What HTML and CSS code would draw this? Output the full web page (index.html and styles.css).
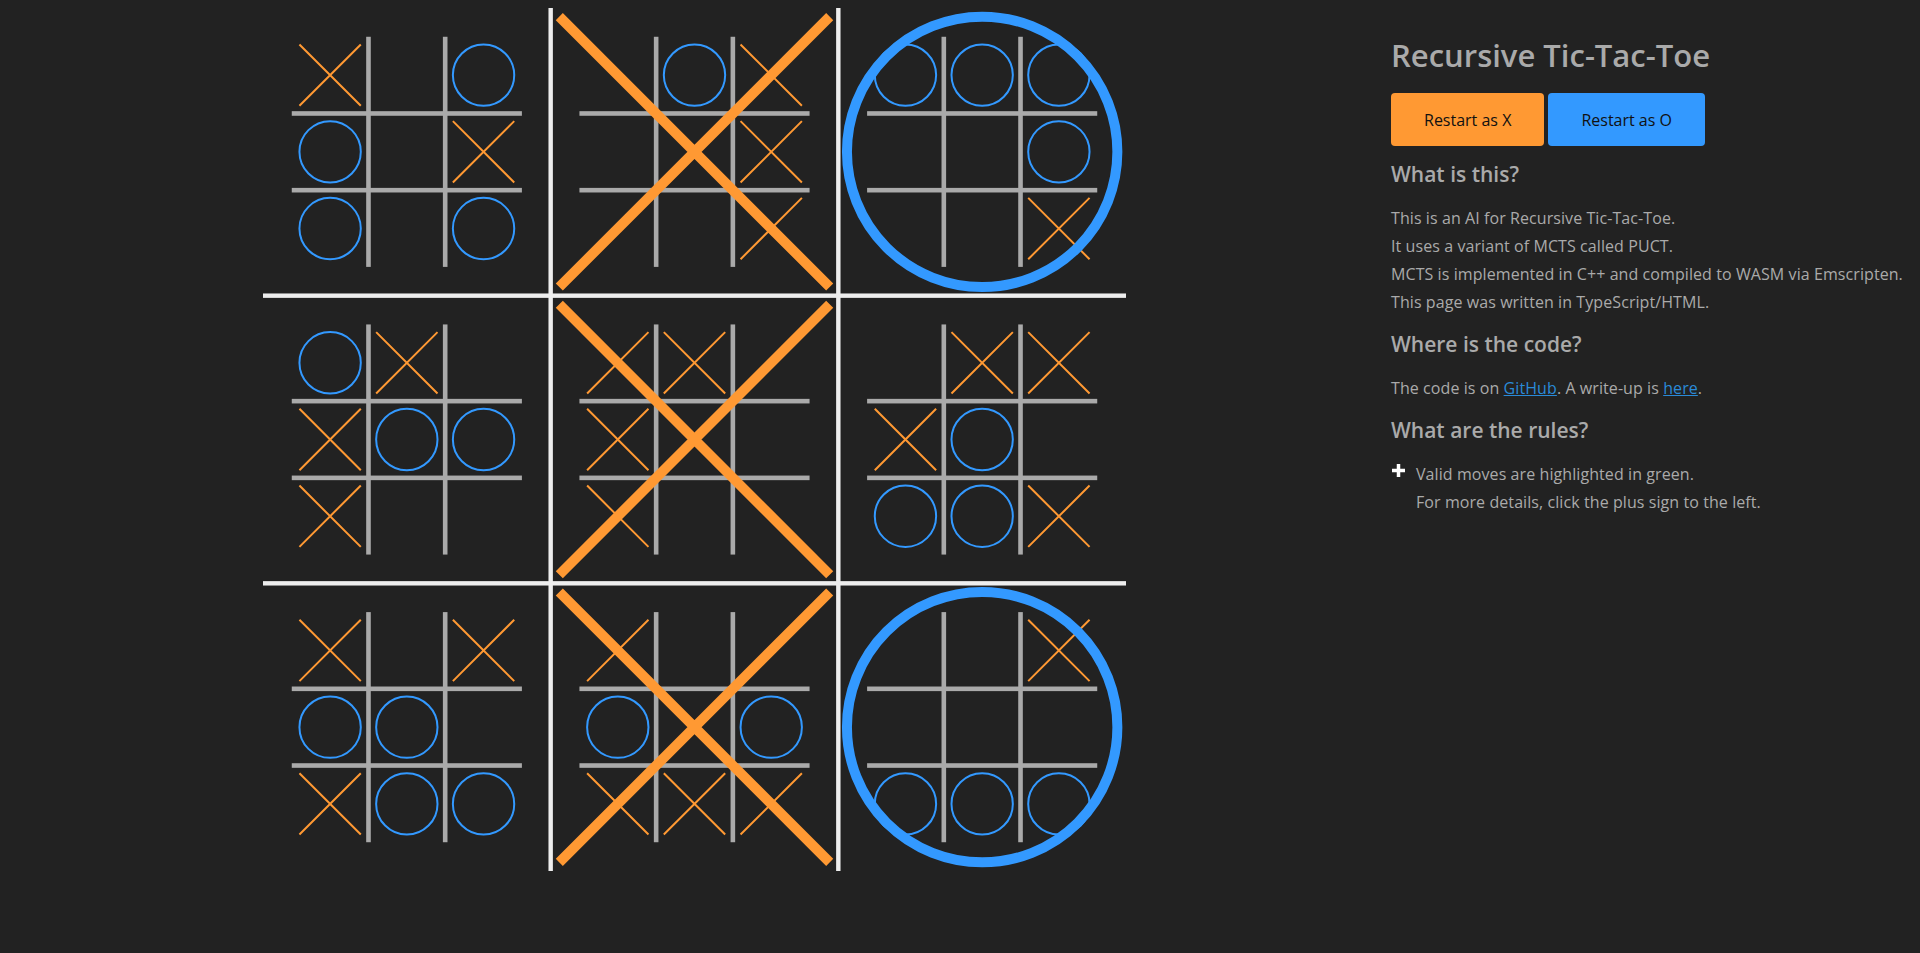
FILE: index.html
```html
<!DOCTYPE html>
<html lang="en">
<head>
<meta charset="utf-8">
<title>Recursive Tic-Tac-Toe</title>
<link rel="stylesheet" href="styles.css">
</head>
<body>
<div class="page">
  <div class="board">
    <svg class="board-svg" viewBox="0 0 863 863" width="863" height="863" xmlns="http://www.w3.org/2000/svg" xmlns:xlink="http://www.w3.org/1999/xlink">
      <defs>
        <g id="sb">
          <rect class="sub-line" x="103.18" y="28.77" width="4.6" height="230.13"/>
          <rect class="sub-line" x="179.89" y="28.77" width="4.6" height="230.13"/>
          <rect class="sub-line" x="28.77" y="103.18" width="230.13" height="4.6"/>
          <rect class="sub-line" x="28.77" y="179.89" width="230.13" height="4.6"/>
        </g>
        <path id="mx" class="mark-x" d="M-30.68 -30.68L30.68 30.68M30.68 -30.68L-30.68 30.68"/>
        <circle id="mo" class="mark-o" cx="0" cy="0" r="30.68"/>
        <path id="bx" class="big-x" d="M-135.2 -135.2L135.2 135.2M135.2 -135.2L-135.2 135.2"/>
        <circle id="bo" class="big-o" cx="0" cy="0" r="135.2"/>
      </defs>

      <rect class="main-line" x="285.47" y="0" width="4.4" height="863"/>
      <rect class="main-line" x="573.13" y="0" width="4.4" height="863"/>
      <rect class="main-line" x="0" y="285.47" width="863" height="4.4"/>
      <rect class="main-line" x="0" y="573.13" width="863" height="4.4"/>

      <!-- (0,0) -->
      <g transform="translate(0,0)">
        <use href="#sb"/>
        <use href="#mx" x="67.12" y="67.12"/>
        <use href="#mo" x="220.55" y="67.12"/>
        <use href="#mo" x="67.12" y="143.83"/>
        <use href="#mx" x="220.55" y="143.83"/>
        <use href="#mo" x="67.12" y="220.55"/>
        <use href="#mo" x="220.55" y="220.55"/>
      </g>
      <!-- (0,1) -->
      <g transform="translate(287.67,0)">
        <use href="#sb"/>
        <use href="#mo" x="143.83" y="67.12"/>
        <use href="#mx" x="220.55" y="67.12"/>
        <use href="#mx" x="220.55" y="143.83"/>
        <use href="#mx" x="220.55" y="220.55"/>
        <use href="#bx" x="143.83" y="143.83"/>
      </g>
      <!-- (0,2) -->
      <g transform="translate(575.33,0)">
        <use href="#sb"/>
        <use href="#mo" x="67.12" y="67.12"/>
        <use href="#mo" x="143.83" y="67.12"/>
        <use href="#mo" x="220.55" y="67.12"/>
        <use href="#mo" x="220.55" y="143.83"/>
        <use href="#mx" x="220.55" y="220.55"/>
        <use href="#bo" x="143.83" y="143.83"/>
      </g>
      <!-- (1,0) -->
      <g transform="translate(0,287.67)">
        <use href="#sb"/>
        <use href="#mo" x="67.12" y="67.12"/>
        <use href="#mx" x="143.83" y="67.12"/>
        <use href="#mx" x="67.12" y="143.83"/>
        <use href="#mo" x="143.83" y="143.83"/>
        <use href="#mo" x="220.55" y="143.83"/>
        <use href="#mx" x="67.12" y="220.55"/>
      </g>
      <!-- (1,1) -->
      <g transform="translate(287.67,287.67)">
        <use href="#sb"/>
        <use href="#mx" x="67.12" y="67.12"/>
        <use href="#mx" x="143.83" y="67.12"/>
        <use href="#mx" x="67.12" y="143.83"/>
        <use href="#mx" x="67.12" y="220.55"/>
        <use href="#bx" x="143.83" y="143.83"/>
      </g>
      <!-- (1,2) -->
      <g transform="translate(575.33,287.67)">
        <use href="#sb"/>
        <use href="#mx" x="143.83" y="67.12"/>
        <use href="#mx" x="220.55" y="67.12"/>
        <use href="#mx" x="67.12" y="143.83"/>
        <use href="#mo" x="143.83" y="143.83"/>
        <use href="#mo" x="67.12" y="220.55"/>
        <use href="#mo" x="143.83" y="220.55"/>
        <use href="#mx" x="220.55" y="220.55"/>
      </g>
      <!-- (2,0) -->
      <g transform="translate(0,575.33)">
        <use href="#sb"/>
        <use href="#mx" x="67.12" y="67.12"/>
        <use href="#mx" x="220.55" y="67.12"/>
        <use href="#mo" x="67.12" y="143.83"/>
        <use href="#mo" x="143.83" y="143.83"/>
        <use href="#mx" x="67.12" y="220.55"/>
        <use href="#mo" x="143.83" y="220.55"/>
        <use href="#mo" x="220.55" y="220.55"/>
      </g>
      <!-- (2,1) -->
      <g transform="translate(287.67,575.33)">
        <use href="#sb"/>
        <use href="#mx" x="67.12" y="67.12"/>
        <use href="#mo" x="67.12" y="143.83"/>
        <use href="#mo" x="220.55" y="143.83"/>
        <use href="#mx" x="67.12" y="220.55"/>
        <use href="#mx" x="143.83" y="220.55"/>
        <use href="#mx" x="220.55" y="220.55"/>
        <use href="#bx" x="143.83" y="143.83"/>
      </g>
      <!-- (2,2) -->
      <g transform="translate(575.33,575.33)">
        <use href="#sb"/>
        <use href="#mx" x="220.55" y="67.12"/>
        <use href="#mo" x="67.12" y="220.55"/>
        <use href="#mo" x="143.83" y="220.55"/>
        <use href="#mo" x="220.55" y="220.55"/>
        <use href="#bo" x="143.83" y="143.83"/>
      </g>
    </svg>
  </div>

  <div class="panel">
    <h1 class="title">Recursive Tic-Tac-Toe</h1>
    <div class="buttons">
      <button class="btn btn-x">Restart as X</button>
      <button class="btn btn-o">Restart as O</button>
    </div>
    <h2 class="section-title">What is this?</h2>
    <p class="text">This is an AI for Recursive Tic-Tac-Toe.<br>It uses a variant of MCTS called PUCT.<br>MCTS is implemented in C++ and compiled to WASM via Emscripten.<br>This page was written in TypeScript/HTML.</p>
    <h2 class="section-title">Where is the code?</h2>
    <p class="text">The code is on <a class="link" href="#">GitHub</a>. A write-up is <a class="link" href="#">here</a>.</p>
    <h2 class="section-title">What are the rules?</h2>
    <div class="rules">
      <span class="plus">
        <svg class="plus-icon" viewBox="0 0 13 13" width="13" height="13"><rect x="0" y="4.75" width="13" height="3.5"/><rect x="4.75" y="0" width="3.5" height="13"/></svg>
      </span>
      <p class="text">Valid moves are highlighted in green.<br>For more details, click the plus sign to the left.</p>
    </div>
  </div>
</div>
</body>
</html>
```

FILE: styles.css
```css
html, body {
  background: #222222;
}

body {
  margin: 8px;
  font-family: "Open Sans", "Noto Sans", sans-serif;
  font-size: 16px;
  line-height: 28px;
  color: #aaaaaa;
}

.page {
  display: flex;
  align-items: flex-start;
  padding-left: 255px;
  gap: 265px;
}

.board {
  flex: none;
  width: 863px;
  height: 863px;
}

.board-svg {
  display: block;
}

.main-line {
  fill: #eeeeee;
}

.sub-line {
  fill: #aaaaaa;
}

.mark-x {
  fill: none;
  stroke: #ff9933;
  stroke-width: 2;
}

.mark-o {
  fill: none;
  stroke: #3399ff;
  stroke-width: 2;
}

.big-x {
  fill: none;
  stroke: #ff9933;
  stroke-width: 10;
}

.big-o {
  fill: none;
  stroke: #3399ff;
  stroke-width: 10;
}

.panel {
  flex: none;
  width: 520px;
}

.title {
  margin: 29px 0 0;
  font-size: 31px;
  line-height: 36px;
  font-weight: 600;
  color: #aaaaaa;
}

.buttons {
  display: flex;
  gap: 4px;
  margin-top: 20px;
}

.btn {
  height: 53px;
  padding: 0 33px;
  border: none;
  border-radius: 4px;
  font-family: "Open Sans", "Noto Sans", sans-serif;
  font-size: 16px;
  color: #111111;
  cursor: pointer;
}

.btn-x {
  background: #ff9933;
}

.btn-o {
  background: #3399ff;
}

.section-title {
  margin: 14px 0 16px;
  font-size: 21px;
  line-height: 28px;
  font-weight: 600;
  color: #aaaaaa;
}

.text {
  margin: 0;
  letter-spacing: 0.08px;
}

.link {
  color: #2a8ad8;
  text-decoration: underline;
}

.rules {
  display: flex;
}

.plus {
  flex: none;
  width: 25px;
  padding-top: 4px;
  padding-left: 1px;
  box-sizing: border-box;
}

.plus-icon {
  display: block;
  fill: #ffffff;
}
```
